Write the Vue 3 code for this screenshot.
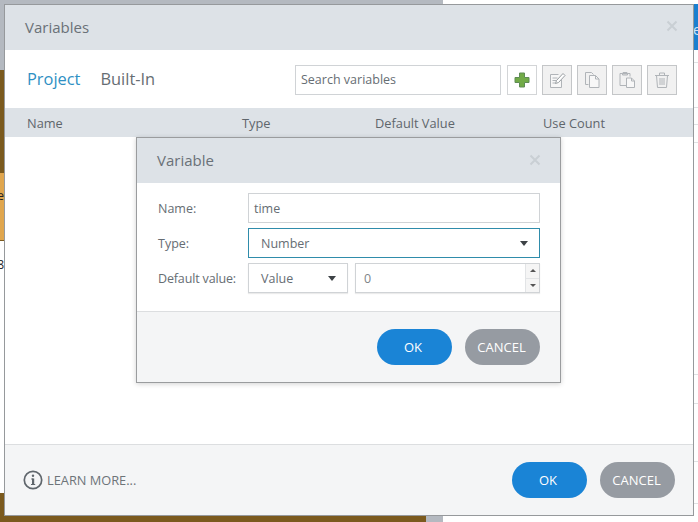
<script setup>
const columns = ['Name', 'Type', 'Default Value', 'Use Count']
</script>

<template>
  <div class="desk">
    <div class="bg top-gray"></div>
    <div class="bg top-white"></div>
    <div class="bg left-gray"></div>
    <div class="bg left-brown"></div>
    <div class="bg left-orange"><span class="edge-e">e</span></div>
    <div class="bg left-white"><span class="edge-8">8</span></div>
    <div class="bg bottom-brown"></div>
    <div class="bg bottom-gray"></div>
    <div class="bg right-blue"><span class="edge-blue">e</span></div>
    <div class="bg right-line l1"></div>
    <div class="bg right-line l2"></div>
    <div class="bg right-line l3"></div>
    <div class="bg right-line l4"></div>
    <div class="bg right-line l5"></div>
    <div class="bg right-line l6"></div>
    <div class="bg right-line l7"></div>
    <div class="bg right-line l8"></div>

    <section class="outer">
      <header class="title-bar outer-title">
        <span>Variables</span>
        <svg class="close" width="12" height="12" viewBox="0 0 12 12"><path d="M1.5 1.5l9 9M10.5 1.5l-9 9" /></svg>
      </header>

      <div class="toolbar">
        <nav class="tabs">
          <span class="tab active">Project</span>
          <span class="tab">Built-In</span>
        </nav>
        <div class="tools">
          <div class="search">Search variables</div>
          <button class="tool add">
            <svg width="16" height="16" viewBox="0 0 16 16">
              <path d="M5.5 1h5v4.500h4.500v5h-4.500v4.500h-5v-4.500h-4.500v-5h4.500z" fill="#72ab48" stroke="#5f8c55" stroke-width="1" />
            </svg>
          </button>
          <button class="tool off">
            <svg width="18" height="18" viewBox="0 0 18 18" fill="none" stroke="#b0b4b8">
              <path d="M13.500 9v7.500h-11v-13h8" fill="#f7f7f7" />
              <path d="M4.500 7h5M4.500 9.500h4M4.500 12h3" />
              <path d="M7.500 12.500l1-3 6.500-7 2 2-6.500 7z" fill="#fff" stroke="#989da1" />
            </svg>
          </button>
          <button class="tool off">
            <svg width="18" height="18" viewBox="0 0 18 18" fill="none" stroke="#b0b4b8">
              <path d="M5.500 13.500h-3v-12h6l2 2" />
              <path d="M6.500 4.500h6l3.500 3.500v8.500h-9.500z" fill="#f7f7f7" />
              <path d="M12.500 4.500v3.500h3.500" />
            </svg>
          </button>
          <button class="tool off">
            <svg width="18" height="18" viewBox="0 0 18 18" fill="none" stroke="#b0b4b8">
              <path d="M8 14.500h-6v-12h10v3" />
              <path d="M5 2.500v-1h4v1M4.500 4h5v-1.500h-5z" fill="#ddd" />
              <path d="M8.500 7h5l3 3v6.500h-8z" fill="#f7f7f7" />
              <path d="M13.500 7v3h3" />
            </svg>
          </button>
          <button class="tool off">
            <svg width="18" height="18" viewBox="0 0 18 18" fill="none" stroke="#b0b4b8">
              <path d="M2 4.500h14M6.500 4.500v-2.500h5v2.500M3.500 4.500l1 12h9l1-12" />
              <path d="M7 7v7M9 7v7M11 7v7" />
            </svg>
          </button>
        </div>
      </div>

      <div class="table-head">
        <span v-for="c in columns" :key="c">{{ c }}</span>
      </div>
      <div class="table-body"></div>

      <footer class="outer-foot">
        <div class="learn">
          <svg width="20" height="20" viewBox="0 0 20 20">
            <circle cx="10" cy="10" r="8.700" fill="none" stroke="#5f666c" stroke-width="1.700" />
            <rect x="9" y="8.500" width="2.200" height="6" fill="#5f666c" />
            <rect x="8" y="14" width="4.200" height="1" fill="#5f666c" />
            <rect x="8.200" y="8.500" width="2" height="1" fill="#5f666c" />
            <circle cx="10" cy="5.800" r="1.200" fill="#5f666c" />
          </svg>
          <span>LEARN MORE...</span>
        </div>
        <div class="actions">
          <button class="pill ok">OK</button>
          <button class="pill cancel">CANCEL</button>
        </div>
      </footer>
    </section>

    <section class="inner">
      <header class="title-bar inner-title">
        <span>Variable</span>
        <svg class="close" width="12" height="12" viewBox="0 0 12 12"><path d="M1.500 1.500l9 9M10.500 1.500l-9 9" /></svg>
      </header>
      <div class="form">
        <label class="row">
          <span class="lab">Name:</span>
          <div class="field grow name">time</div>
        </label>
        <label class="row">
          <span class="lab">Type:</span>
          <div class="field grow select focus">Number<i class="caret"></i></div>
        </label>
        <label class="row">
          <span class="lab tight">Default value:</span>
          <div class="field select small">Value<i class="caret"></i></div>
          <div class="field grow number">
            <span>0</span>
            <div class="spin">
              <b><i class="up"></i></b>
              <b><i class="down"></i></b>
            </div>
          </div>
        </label>
      </div>
      <footer class="inner-foot">
        <button class="pill ok">OK</button>
        <button class="pill cancel">CANCEL</button>
      </footer>
    </section>
  </div>
</template>

<style>
html, body { margin: 0; background: #fff; }
</style>

<style scoped>
.desk {
  position: relative;
  width: 698px;
  height: 522px;
  overflow: hidden;
  background: #fff;
  font-family: "Open Sans", "Noto Sans", sans-serif;
  color: #5f666c;
}
.bg { position: absolute; }
.top-gray { left: 0; top: 0; width: 443px; height: 4px; background: #b4b9c0; }
.top-white { left: 443px; top: 0; width: 255px; height: 4px; background: #fff; }
.left-gray { left: 0; top: 0; width: 4px; height: 70px; background: #b4b9c0; }
.left-brown { left: 0; top: 70px; width: 4px; height: 103px; background: #7b5a1e; }
.left-orange { left: 0; top: 173px; width: 4px; height: 68px; background: #e0a64e; border-bottom: 1px solid #7b5a1e; box-sizing: border-box; overflow: hidden; }
.left-white { left: 0; top: 241px; width: 4px; height: 60px; overflow: hidden; }
.edge-e { position: absolute; right: 0; top: 14px; font-size: 12px; color: #222; }
.edge-8 { position: absolute; right: 0; top: 15px; font-size: 12px; color: #222; }
.bottom-brown { left: 0; top: 493px; width: 4px; height: 29px; background: #7b5a1e; }
.bottom-brown::after { content: ""; position: absolute; left: 0; top: 22px; width: 426px; height: 7px; background: #7b5a1e; }
.bottom-gray { left: 426px; top: 515px; width: 17px; height: 7px; background: #b4b9c0; }
.right-blue { left: 693px; top: 4px; width: 5px; height: 46px; background: #1a7fcf; overflow: hidden; }
.edge-blue { position: absolute; left: 0; top: 16px; font-size: 14px; color: #cfe6f7; }
.right-line { left: 693px; width: 5px; height: 1px; background: #dfe1e3; }
.l1 { top: 62px; }
.l2 { top: 107px; }
.l3 { top: 124px; }
.l4 { top: 142px; }
.l5 { top: 374px; }
.l6 { top: 403px; }
.l7 { top: 461px; }
.l8 { top: 503px; }

.outer {
  position: absolute;
  left: 4px;
  top: 4px;
  width: 690px;
  height: 512px;
  box-sizing: border-box;
  border: 1px solid #96999c;
  background: #fff;
  display: flex;
  flex-direction: column;
}
.title-bar {
  display: flex;
  align-items: center;
  justify-content: space-between;
  background: #dde2e7;
  box-sizing: border-box;
  font-size: 15px;
  color: #6a7178;
}
.outer-title { height: 45px; padding: 0 15px 2px 20px; }
.outer-title .close { margin-top: -2px; }
.close { fill: none; stroke: #c9cfd4; stroke-width: 2; }
.toolbar {
  height: 58px;
  box-sizing: border-box;
  display: flex;
  align-items: center;
  justify-content: space-between;
  padding: 2px 16px 0 22px;
}
.tabs { display: flex; gap: 20px; font-size: 16.4px; margin-top: -3px; }
.tab { color: #666d73; }
.tab.active { color: #2f90c4; }
.tools { display: flex; gap: 5px; align-items: center; }
.search {
  width: 206px;
  height: 30px;
  margin-right: 1px;
  box-sizing: border-box;
  border: 1px solid #d0d3d6;
  padding-left: 5px;
  line-height: 28px;
  font-size: 12.5px;
  color: #666d73;
}
.tool {
  width: 30px;
  height: 30px;
  padding: 0;
  box-sizing: border-box;
  display: flex;
  align-items: center;
  justify-content: center;
  background: #fff;
  border: 1px solid #d3d5d7;
}
.tool.off { background: #f1f1f1; border-color: #c4c6c8; }
.table-head {
  height: 29px;
  background: #dde2e7;
  display: grid;
  grid-template-columns: 215px 133px 168px 1fr;
  align-items: center;
  padding-left: 22px;
  font-size: 12.8px;
  font-weight: 500;
  color: #5f666c;
}
.table-body { flex: 1; background: #fff; }
.outer-foot {
  height: 71px;
  box-sizing: border-box;
  border-top: 1px solid #dcdee0;
  background: #f4f5f6;
  display: flex;
  align-items: center;
  justify-content: space-between;
  padding: 0 18px 0 18px;
}
.learn { display: flex; align-items: center; gap: 4px; font-size: 12.8px; color: #6d7479; }
.actions, .inner-foot { display: flex; gap: 13px; }
.pill {
  width: 75px;
  height: 36px;
  border: none;
  border-radius: 18px;
  padding: 0;
  color: #fff;
  font-family: inherit;
  font-size: 13px;
}
.ok { background: #1a84d6; font-weight: 500; padding-right: 3px; }
.cancel { background: #969ba2; padding-right: 2px; }

.inner {
  position: absolute;
  left: 136px;
  top: 137px;
  width: 425px;
  height: 246px;
  box-sizing: border-box;
  border: 1px solid #9a9c9e;
  background: #fff;
  display: flex;
  flex-direction: column;
  box-shadow: 0 1px 5px rgba(0, 0, 0, 0.18);
}
.inner-title { height: 45px; padding: 0 19px 2px 20px; }
.form {
  flex: 1;
  padding: 10px 20px 0 21px;
  display: flex;
  flex-direction: column;
  gap: 5px;
}
.row { display: flex; align-items: center; height: 30px; font-size: 12.5px; color: #666d73; }
.lab { width: 90px; flex: none; }
.tight { letter-spacing: -0.15px; }
.field {
  height: 30px;
  box-sizing: border-box;
  border: 1px solid #d0d3d6;
  display: flex;
  align-items: center;
  position: relative;
  font-size: 12.5px;
  color: #666d73;
}
.grow { flex: 1; }
.name { padding-left: 5px; }
.select { padding-left: 12px; }
.select.focus { border-color: #2f8cab; }
.small { width: 100px; margin-right: 7px; flex: none; box-shadow: 0 1px 1px rgba(0,0,0,.08); }
.caret {
  position: absolute;
  right: 11px;
  top: 12px;
  width: 0;
  height: 0;
  border-left: 4px solid transparent;
  border-right: 4px solid transparent;
  border-top: 5px solid #3d4246;
}
.number { padding-left: 8px; justify-content: space-between; box-shadow: 0 1px 1px rgba(0,0,0,.08); color: #808589; }
.spin { width: 13px; height: 28px; display: flex; flex-direction: column; border-left: 1px solid #e2e4e6; }
.spin b { flex: 1; display: flex; align-items: center; justify-content: center; background: #f5f5f5; }
.spin b + b { border-top: 1px solid #e2e4e6; }
.up, .down { width: 0; height: 0; border-left: 3px solid transparent; border-right: 3px solid transparent; }
.up { border-bottom: 3px solid #555; }
.down { border-top: 3px solid #555; }
.inner-foot {
  height: 71px;
  box-sizing: border-box;
  border-top: 1px solid #dcdee0;
  background: #f4f5f6;
  align-items: center;
  justify-content: flex-end;
  padding-right: 20px;
}
</style>
